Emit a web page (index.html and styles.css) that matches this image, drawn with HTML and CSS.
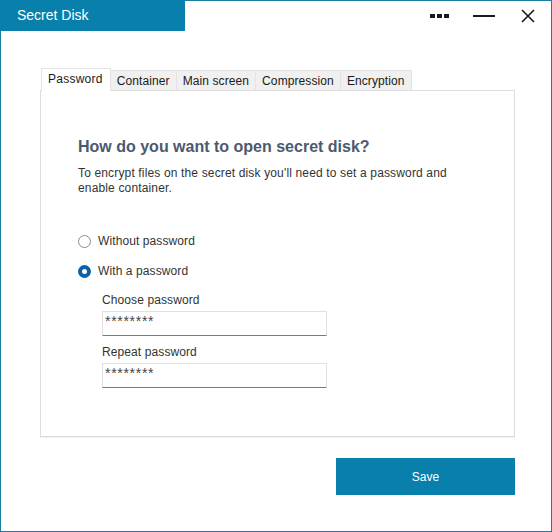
FILE: index.html
```html
<!DOCTYPE html>
<html>
<head>
<meta charset="utf-8">
<link rel="stylesheet" href="styles.css">
</head>
<body>
<div class="window">
  <div class="titlebar">
    <div class="title">Secret Disk</div>
    <div class="controls">
      <span class="ctl dots"><i></i><i></i><i></i></span>
      <span class="ctl minus"><i></i></span>
      <span class="ctl close">
        <svg width="14" height="14" viewBox="0 0 14 14"><path d="M1 1 L13 13 M13 1 L1 13" stroke="#1a1a1a" stroke-width="1.6" fill="none"/></svg>
      </span>
    </div>
  </div>
  <div class="content">
    <div class="tabs">
      <div class="tab active">Password</div>
      <div class="tab">Container</div>
      <div class="tab">Main screen</div>
      <div class="tab">Compression</div>
      <div class="tab">Encryption</div>
    </div>
    <div class="panel">
      <h1 class="heading">How do you want to open secret disk?</h1>
      <p class="desc">To encrypt files on the secret disk you'll need to set a password and enable container.</p>
      <div class="options">
        <label class="opt"><span class="radio"></span>Without password</label>
        <label class="opt"><span class="radio checked"></span>With a password</label>
      </div>
      <div class="fields">
        <div class="field-label">Choose password</div>
        <div class="input">********</div>
        <div class="field-label second">Repeat password</div>
        <div class="input">********</div>
      </div>
    </div>
    <div class="actions">
      <button class="save">Save</button>
    </div>
  </div>
</div>
</body>
</html>
```
FILE: styles.css
```css
html, body {
  margin: 0;
  padding: 0;
  background: #ffffff;
}
body {
  font-family: "Liberation Sans", Arial, sans-serif;
  color: #333;
}
.window {
  width: 552px;
  height: 532px;
  box-sizing: border-box;
  border: 1px solid #1a7ea3;
  background: #fff;
}
.titlebar {
  display: flex;
  justify-content: space-between;
  height: 30px;
  margin: -1px 0 0 -1px;
}
.title {
  width: 185px;
  height: 31px;
  background: #0880ab;
  color: #fff;
  font-size: 14px;
  line-height: 31px;
  padding-left: 17px;
  box-sizing: border-box;
}
.controls {
  display: flex;
  align-items: center;
  height: 32px;
}
.ctl {
  display: flex;
  align-items: center;
}
.dots {
  gap: 2px;
  margin-right: 24px;
}
.dots i {
  display: block;
  width: 5px;
  height: 4px;
  background: #1a1a1a;
}
.minus {
  margin-right: 26px;
}
.minus i {
  display: block;
  width: 22px;
  height: 2px;
  background: #1a1a1a;
}
.close {
  margin-right: 16px;
}
.content {
  padding: 38px 37px 0 39px;
}
.tabs {
  display: flex;
  align-items: flex-end;
  padding-left: 1px;
  height: 22px;
  position: relative;
  z-index: 1;
}
.tab {
  font-size: 12px;
  letter-spacing: 0.1px;
  height: 19px;
  line-height: 20px;
  padding: 0 6px 0 6px;
  background: #f0f0f0;
  border: 1px solid #e3e3e3;
  border-bottom: none;
  border-left: none;
  color: #1a1a1a;
}
.tab.active {
  height: 22px;
  line-height: 21px;
  background: #fff;
  border-left: 1px solid #e3e3e3;
  padding: 0 7px 0 6px;
  letter-spacing: 0.25px;
  margin-bottom: -1px;
}
.panel {
  width: 475px;
  height: 347px;
  box-sizing: border-box;
  border: 1px solid #dedede;
  box-shadow: 0 1px 0 #f0f0f0;
  padding: 46px 37px 0 37px;
}
.heading {
  margin: 0;
  font-size: 16px;
  line-height: 20px;
  font-weight: bold;
  color: #4b5a6e;
}
.desc {
  margin: 9px 0 0 0;
  font-size: 12px;
  letter-spacing: 0.15px;
  line-height: 15px;
  color: #333;
  width: 390px;
}
.options {
  margin-top: 38px;
  display: flex;
  flex-direction: column;
  gap: 15px;
}
.opt {
  display: flex;
  align-items: center;
  font-size: 12px;
  letter-spacing: 0.1px;
  line-height: 15px;
  color: #333;
}
.radio {
  width: 11px;
  height: 11px;
  border: 1px solid #8a8a8a;
  border-radius: 50%;
  margin-right: 7px;
  background: #fff;
  box-sizing: content-box;
}
.radio.checked {
  border: 4px solid #0b62a8;
  width: 5px;
  height: 5px;
}
.fields {
  margin-top: 14px;
  padding-left: 24px;
}
.field-label {
  font-size: 12px;
  letter-spacing: 0.1px;
  line-height: 15px;
  color: #333;
}
.field-label.second {
  margin-top: 9px;
}
.input {
  margin-top: 3px;
  width: 225px;
  height: 25px;
  box-sizing: border-box;
  border: 1px solid #e1e1e1;
  border-bottom: 1px solid #7a7a7a;
  font-size: 14px;
  line-height: 16px;
  padding: 1px 2px 0;
  color: #444;
  letter-spacing: 0.7px;
}
.actions {
  display: flex;
  justify-content: flex-end;
  margin-top: 21px;
}
.save {
  width: 179px;
  height: 37px;
  border: none;
  background: #0880ab;
  color: #fff;
  font-family: "Liberation Sans", Arial, sans-serif;
  font-size: 12px;
  padding: 0;
  margin-right: -1px;
}
```
